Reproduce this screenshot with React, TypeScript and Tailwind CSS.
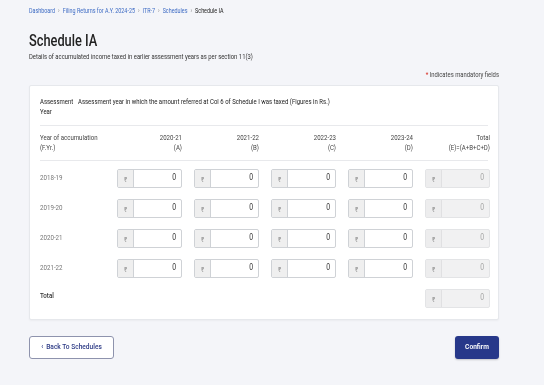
import React from "react";

const years = ["2018-19", "2019-20", "2020-21", "2021-22"];
const cols = [
  { y: "2020-21", l: "(A)" },
  { y: "2021-22", l: "(B)" },
  { y: "2022-23", l: "(C)" },
  { y: "2023-24", l: "(D)" },
];

function T({ children, className = "" }: { children: React.ReactNode; className?: string }) {
  return <span className={`inline-block scale-y-[1.2] ${className}`}>{children}</span>;
}

function Money({ disabled }: { disabled?: boolean }) {
  return (
    <div
      className={`flex h-[19px] rounded-[2px] border ${
        disabled ? "border-[#e3e4e6] bg-[#f1f1f2]" : "border-[#cfd2d6] bg-white"
      }`}
    >
      <div
        className={`flex w-[16px] shrink-0 items-center justify-center border-r text-[6px] text-[#8a8a8a] ${
          disabled ? "border-[#e0e0e2] bg-[#ededee]" : "border-[#cfd2d6] bg-[#efefef]"
        }`}
      >
        <T>₹</T>
      </div>
      <div
        className={`flex flex-1 items-center justify-end pr-[5px] text-[6.8px] ${
          disabled ? "text-[#a5a5a5]" : "text-[#333]"
        }`}
      >
        <T>0</T>
      </div>
    </div>
  );
}

export default function App() {
  return (
    <div
      className="min-h-[385px] w-[544px] bg-[#f4f5f9] pl-[29px] pt-[8px] antialiased will-change-transform"
      style={{ fontFamily: "Roboto, 'Noto Sans', sans-serif" }}
    >
      <div className="w-[470px]">
        {/* breadcrumb */}
        <div className="flex h-[6px] items-center text-[5.4px] leading-[6px]">
          <T className="text-[#3d6bc4]">Dashboard</T>
          <T className="mx-[3px] text-[#888]">›</T>
          <T className="text-[#3d6bc4]">Filing Returns for A.Y. 2024-25</T>
          <T className="mx-[3px] text-[#888]">›</T>
          <T className="text-[#3d6bc4]">ITR-7</T>
          <T className="mx-[3px] text-[#888]">›</T>
          <T className="text-[#3d6bc4]">Schedules</T>
          <T className="mx-[3px] text-[#888]">›</T>
          <T className="text-[#222]">Schedule IA</T>
        </div>

        <h1 className="mt-[19px] text-[12.8px] font-medium leading-[16px] text-[#222]">
          <span className="inline-block scale-y-[1.25]">Schedule IA</span>
        </h1>
        <p className="mt-[4px] text-[5.9px] leading-[8px] text-[#333]">
          <T>Details of accumulated income taxed in earlier assessment years as per section 11(3)</T>
        </p>

        <div className="mt-[10px] text-right text-[5.9px] leading-[8px] text-[#444]">
          <T>
            <span className="text-[#d93025]">*</span> Indicates mandatory fields
          </T>
        </div>

        {/* card */}
        <div className="mt-[6px] rounded-[2px] border border-[#e6e8ec] bg-white px-[10px] pb-[11px] pt-[11px] shadow-[0_1px_2px_rgba(0,0,0,0.04)]">
          <div className="flex border-b border-[#e8e9ec] pb-[8px] text-[6px] leading-[10px] text-[#222]">
            <div className="w-[38px]">
              <T>Assessment</T>
              <br />
              <T>Year</T>
            </div>
            <div>
              <T>Assessment year in which the amount referred at Col 6 of Schedule I was taxed (Figures in Rs.)</T>
            </div>
          </div>

          <div className="grid grid-cols-[65px_repeat(5,65px)] gap-x-[12px] border-b border-[#e8e9ec] pb-[7px] pt-[7px] text-[6.1px] leading-[10px] text-[#444]">
            <div className="whitespace-nowrap">
              <T>Year of accumulation</T>
              <br />
              <T>(F.Yr.)</T>
            </div>
            {cols.map((c) => (
              <div key={c.y} className="text-right">
                <T>{c.y}</T>
                <br />
                <T>{c.l}</T>
              </div>
            ))}
            <div className="whitespace-nowrap text-right">
              <T>Total</T>
              <br />
              <T>(E)=(A+B+C+D)</T>
            </div>
          </div>

          <div className="grid grid-cols-[65px_repeat(5,65px)] gap-x-[12px] gap-y-[11px] pt-[8px]">
            {years.map((y) => (
              <React.Fragment key={y}>
                <div className="flex items-center text-[6.2px] text-[#777]">
                  <T>{y}</T>
                </div>
                <Money />
                <Money />
                <Money />
                <Money />
                <Money disabled />
              </React.Fragment>
            ))}
            <div className="pt-[3px] text-[6.2px] font-medium leading-[8px] text-[#333]">
              <T>Total</T>
            </div>
            <div />
            <div />
            <div />
            <div />
            <Money disabled />
          </div>
        </div>

        {/* buttons */}
        <div className="mt-[16px] flex justify-between">
          <button className="flex h-[23px] w-[85px] items-center justify-center rounded-[3px] border border-[#8e93ad] bg-white text-[6.6px] font-medium text-[#2c3a85]">
            <T>
              <span className="mr-[3px]">‹</span>Back To Schedules
            </T>
          </button>
          <button className="flex h-[23px] w-[44px] items-center justify-center rounded-[3px] bg-[#27388a] text-[6.6px] font-semibold text-white shadow-[0_1px_2px_rgba(0,0,0,0.2)]">
            <T>Confirm</T>
          </button>
        </div>
      </div>
    </div>
  );
}
